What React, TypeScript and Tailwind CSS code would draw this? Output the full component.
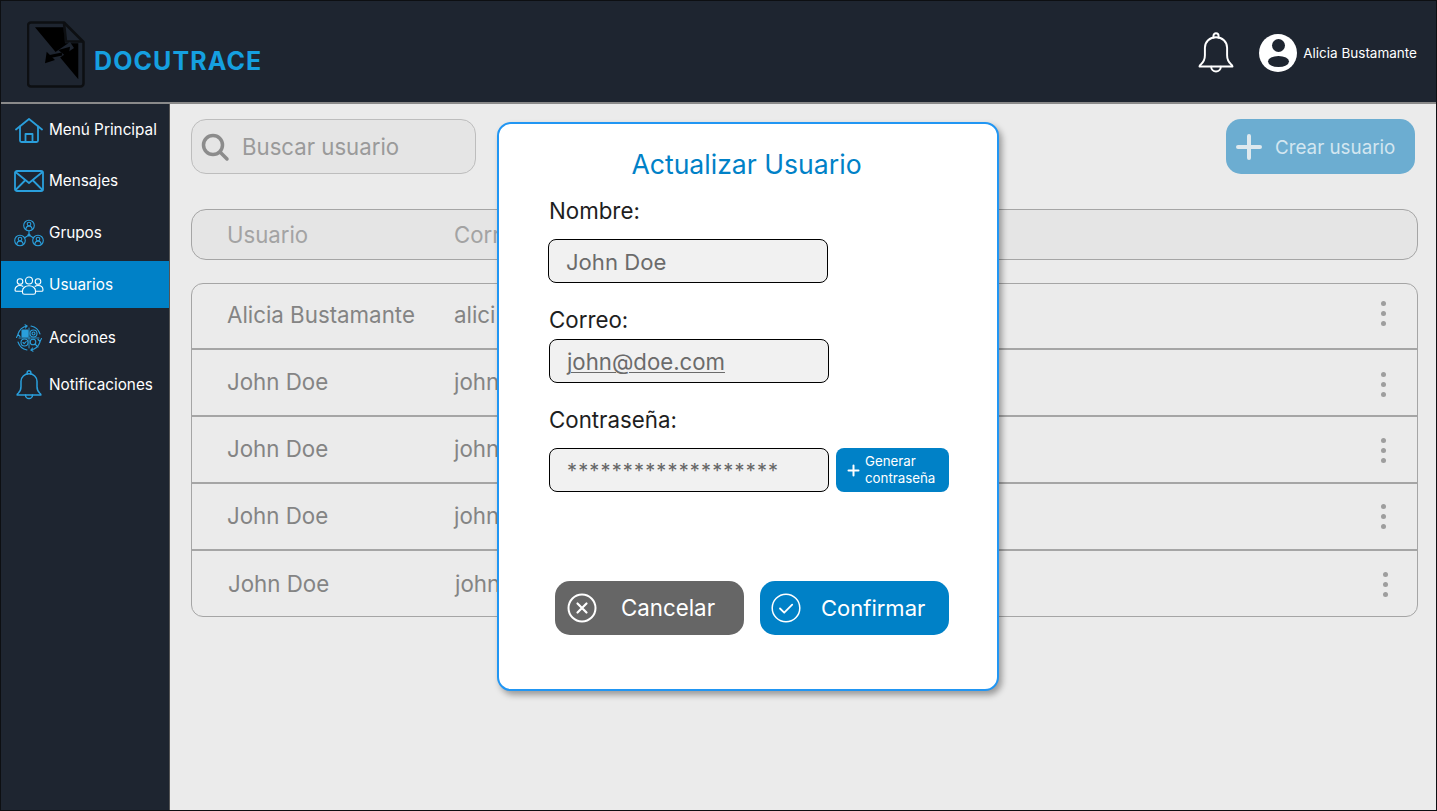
const items = [
  { label: "Menú Principal", icon: <HomeIcon />, cls: "h-[52px]" },
  { label: "Mensajes", icon: <MailIcon />, cls: "h-[50px]" },
  { label: "Grupos", icon: <GroupsIcon />, cls: "h-[54px]" },
  { label: "Usuarios", icon: <UsersIcon />, cls: "h-[47px] mt-[1px] pt-[2px] bg-[#0081c7]" },
  { label: "Acciones", icon: <ActionsIcon />, cls: "h-[46px] mt-[7px]" },
  { label: "Notificaciones", icon: <SideBellIcon />, cls: "h-[46px] mt-[1px]" },
];

const rows = [
  { name: "Alicia Bustamante", mail: "alici", cls: "h-[66px] pl-[35px] pb-[2px]", dots: "mb-[3px]" },
  { name: "John Doe", mail: "john", cls: "h-[67px] pl-[35px] pb-[1px]", dots: "mt-[4px]" },
  { name: "John Doe", mail: "john", cls: "h-[67px] pl-[35px] pb-[1px]", dots: "mt-[3px]" },
  { name: "John Doe", mail: "john", cls: "h-[67px] pl-[35px] pb-[1px]", dots: "mt-[1px]" },
  { name: "John Doe", mail: "john", cls: "h-[65px] pl-[36px]", dots: "mr-[-2px] mt-[2px]" },
];

function HomeIcon() {
  return (
    <svg width="28" height="25" viewBox="0 0 28 25" fill="none" stroke="#2a9fdc" strokeWidth="1.800" strokeLinejoin="round" strokeLinecap="round">
      <path d="M1 11.500 14 1l13 10.500" />
      <path d="M5 8.500V22.500a1.500 1.500 0 0 0 1.500 1.500h15a1.500 1.500 0 0 0 1.500-1.500V8.500" />
      <path d="M10.500 24v-8h7v8" />
    </svg>
  );
}

function MailIcon() {
  return (
    <svg width="30" height="22" viewBox="0 0 30 22" fill="none" stroke="#2a9fdc" strokeWidth="1.800" strokeLinejoin="round" strokeLinecap="round">
      <rect x="1" y="1" width="28" height="20" rx="2" />
      <path d="M1.500 2 15 13 28.500 2" />
      <path d="M1.500 20 11 10.500M28.500 20 19 10.500" />
    </svg>
  );
}

function Person({ x, y }: { x: number; y: number }) {
  return (
    <g transform={`translate(${x} ${y})`}>
      <circle cx="0" cy="0" r="5.300" />
      <circle cx="0" cy="-1.400" r="1.800" />
      <path d="M-3.200 3.500c.4-2.200 1.700-3 3.200-3s2.800.8 3.200 3" />
    </g>
  );
}

function GroupsIcon() {
  return (
    <svg width="30" height="28" viewBox="0 0 30 28" fill="none" stroke="#2a9fdc" strokeWidth="1.100" strokeLinecap="round">
      <Person x={15} y={6.500} />
      <Person x={6} y={21.500} />
      <Person x={24} y={21.500} />
      <path d="M15 12v4M15 16l-4.600 3M15 16l4.600 3" />
      <circle cx="15" cy="16" r="1" fill="#2a9fdc" />
    </svg>
  );
}

function UsersIcon() {
  return (
    <svg width="30" height="19" viewBox="0 0 30 19" fill="none" stroke="#ffffff" strokeWidth="1.100" strokeLinecap="round" strokeLinejoin="round">
      <circle cx="15" cy="4.500" r="3.500" />
      <path d="M8.500 16.500v-1.500c0-3 2.800-5.200 6.500-5.200s6.500 2.200 6.500 5.200v1.500c0 1-1 1.800-2 1.800h-9c-1 0-2-.8-2-1.800Z" />
      <circle cx="6" cy="5.500" r="2.800" />
      <circle cx="24" cy="5.500" r="2.800" />
      <path d="M8.800 10.300C8 9.700 7 9.500 6 9.500c-3 0-5 1.800-5 4.500 0 .8.600 1.300 1.300 1.300h6" />
      <path d="M21.200 10.300c.8-.6 1.800-.8 2.800-.8 3 0 5 1.800 5 4.500 0 .8-.6 1.300-1.300 1.300h-6" />
    </svg>
  );
}

function ActionsIcon() {
  return (
    <svg width="28" height="28" viewBox="0 0 28 28" fill="none" stroke="#2a9fdc" strokeWidth="1.100" strokeLinecap="round" strokeLinejoin="round">
      <path d="M3 10A12 12 0 0 1 12 2M16 2a12 12 0 0 1 9 8M25 18a12 12 0 0 1-9 8M12 26a12 12 0 0 1-9-8" />
      <path d="M1.500 13.500 3 10.500l2 2M26.500 14.500 25 17.500l-2-2M10 .8 12 2l-1.500 2M18 27.200 16 26l1.500-2" />
      <rect x="7" y="6" width="6" height="7" rx="0.500" fill="#2a9fdc" />
      <circle cx="18.500" cy="9.500" r="3.500" />
      <circle cx="18.500" cy="9.500" r="1.500" />
      <circle cx="9.500" cy="18.500" r="3.500" />
      <path d="m8 18.500 1.200 1.200 2-2.200" />
      <circle cx="18" cy="18" r="2.800" />
      <path d="m20 20 3 3" />
      <path d="M14 4v20M4 14h20" strokeWidth="0.900" />
    </svg>
  );
}

function BellIcon({ color, size, sw }: { color: string; size: number; sw: number }) {
  return (
    <svg width={size} height={size * 1.15} viewBox="0 0 24 27.600" fill="none" stroke={color} strokeWidth={sw} strokeLinecap="round" strokeLinejoin="round">
      <path d="M1 23c0-.6.400-1 1-1.500 1.700-1.500 2.600-3.500 2.600-6V10.500C4.600 6.500 7.800 3.500 12 3.500s7.400 3 7.400 7v5c0 2.500.9 4.500 2.600 6 .6.500 1 .9 1 1.500H1Z" />
      <path d="M10.300 3.700V2.500a1.700 1.700 0 0 1 3.400 0v1.200" />
      <path d="M8.800 23.200a3.200 3.200 0 0 0 6.400 0" />
    </svg>
  );
}

function SideBellIcon() {
  return <BellIcon color="#2a9fdc" size={26} sw={1.400} />;
}

function LogoIcon() {
  return (
    <svg width="58" height="67" viewBox="0 0 58 67" fill="none">
      <path d="M4 1.500h33L56.500 21v41.500a3 3 0 0 1-3 3H4a3 3 0 0 1-3-3v-58a3 3 0 0 1 3-3Z" stroke="#0d0f12" strokeWidth="2.500" strokeLinejoin="round" />
      <path d="M37 2l2 18.500h17" stroke="#0d0f12" strokeWidth="2.500" />
      <path d="M8 6.300h28.300L38 22.300h13.300v36Z" fill="#000000" />
      <path d="M16 44 45 24" stroke="#1e2530" strokeWidth="7" />
      <path d="M18 42.300 19.700 30.700 28 39ZM43 25.700 31.300 29 41.300 37.300Z" fill="#000000" />
      <path d="M23 35.500 35 33" stroke="#000000" strokeWidth="3" />
    </svg>
  );
}

function App() {
  return (
    <div className="relative h-[811px] w-[1437px] overflow-hidden border border-[#0d0f12] bg-[#ebebeb] font-['Inter',sans-serif]">
      <header className="flex h-[103px] items-center justify-between border-b-2 border-[#8a8a8a] bg-[#1e2530] pl-[26px] pr-[19px]">
        <div className="mt-[6px] flex items-center gap-[9px]">
          <LogoIcon />
          <span className="mt-[14px] text-[25px] font-bold tracking-[1.100px] text-[#15a0e0]">DOCUTRACE</span>
        </div>
        <div className="mt-[3px] flex items-center">
          <BellIcon color="#ffffff" size={36} sw={1.300} />
          <div className="ml-[25px] flex h-[38px] w-[38px] flex-col items-center justify-center gap-[4px] overflow-hidden rounded-full bg-white">
            <div className="h-[13px] w-[13px] rounded-full bg-[#1e2530]" />
            <div className="h-[11px] w-[21px] rounded-[50%] bg-[#1e2530]" />
          </div>
          <span className="ml-[6px] text-[13.500px] text-white">Alicia Bustamante</span>
        </div>
      </header>

      <div className="flex h-[706px]">
        <aside className="h-full w-[169px] shrink-0 border-r border-[#555] bg-[#1e2530]">
          {items.map((item) => (
            <div key={item.label} className={`flex items-center ${item.cls}`}>
              <div className="flex w-[48px] shrink-0 justify-center pl-[7px]">{item.icon}</div>
              <span className="text-[15.300px] text-white">{item.label}</span>
            </div>
          ))}
        </aside>

        <main className="flex-1 pl-[21px] pr-[18px] pt-[15px]">
          <div className="flex items-center justify-between">
            <div className="flex h-[55px] w-[285px] items-center rounded-[15px] border border-[#bdbdbd] bg-[#e5e5e5] pl-[8px]">
              <svg width="30" height="30" viewBox="0 0 30 30" fill="none" stroke="#8c8c8c" strokeWidth="3.500" strokeLinecap="round">
                <circle cx="13" cy="13" r="9.500" />
                <path d="m20 20 7 7" />
              </svg>
              <span className="ml-[12px] mt-[1px] text-[22.200px] text-[#9a9a9a]">Buscar usuario</span>
            </div>
            <div className="mr-[3px] flex h-[55px] w-[189px] items-center rounded-[15px] bg-[#6cadd1] pl-[10px]">
              <svg width="26" height="26" viewBox="0 0 26 26" stroke="#dfe9ee" strokeWidth="4" strokeLinecap="round">
                <path d="M13 2v22M2 13h22" />
              </svg>
              <span className="ml-[13px] mt-[3px] text-[18.800px] text-[#d3e6f0]">Crear usuario</span>
            </div>
          </div>

          <div className="mt-[35px] flex h-[51px] items-center rounded-[15px] border border-[#a5a5a5] bg-[#e5e5e5] pl-[35px] text-[22.200px] text-[#a3a3a3]">
            <span className="w-[227px]">Usuario</span>
            <span>Correo</span>
          </div>

          <div className="mt-[23px] overflow-hidden rounded-[12px] border border-[#a5a5a5]">
            {rows.map((row, i) => (
              <div key={i} className={`flex items-center border-[#a5a5a5] pr-[31px] text-[22.300px] text-[#848484] not-last:border-b-2 ${row.cls}`}>
                <span className="w-[227px]">{row.name}</span>
                <span className="flex-1">{row.mail}</span>
                <div className={`flex flex-col gap-[5px] ${row.dots}`}>
                  <div className="h-[5px] w-[5px] rounded-full bg-[#9e9e9e]" />
                  <div className="h-[5px] w-[5px] rounded-full bg-[#9e9e9e]" />
                  <div className="h-[5px] w-[5px] rounded-full bg-[#9e9e9e]" />
                </div>
              </div>
            ))}
          </div>
        </main>
      </div>

      {/* modal */}
      <div className="absolute left-[496px] top-[121px] h-[569px] w-[502px] rounded-[14px] border-[2.500px] border-[#2196f3] bg-white pl-[50px] pt-[22px] shadow-[3px_4px_6px_rgba(0,0,0,0.35)]">
        <h2 className="pr-[53px] text-center text-[26.600px] leading-[36px] text-[#0081c7]">Actualizar Usuario</h2>
        <label className="mt-[14px] block text-[22.300px] leading-[30px] text-[#1e1e1e]">Nombre:</label>
        <div className="ml-[-1px] mt-[13px] flex h-[44px] w-[280px] items-center rounded-[8px] border border-black bg-[#f1f1f1] pl-[17px] pt-[3px] text-[22.100px] text-[#6b6b6b]">John Doe</div>
        <label className="mt-[22px] block text-[22.300px] leading-[30px] text-[#1e1e1e]">Correo:</label>
        <div className="mt-[4px] flex h-[44px] w-[280px] items-center rounded-[8px] border border-black bg-[#f1f1f1] pl-[17px] pt-[2px] text-[22.200px] text-[#6b6b6b] underline decoration-1 underline-offset-2">john@doe.com</div>
        <label className="mt-[22px] block text-[22.300px] leading-[30px] text-[#1e1e1e]">Contraseña:</label>
        <div className="mt-[13px] flex items-stretch gap-[7px]">
          <div className="flex h-[44px] w-[280px] items-center rounded-[8px] border border-black bg-[#f1f1f1] pl-[17px] pt-[2px] text-[20px] tracking-[1.150px] text-[#666]">*******************</div>
          <div className="flex w-[113px] items-center rounded-[8px] bg-[#0081c7] pl-[11px]">
            <svg width="13" height="13" viewBox="0 0 13 13" stroke="#fff" strokeWidth="2" strokeLinecap="round">
              <path d="M6.500 1.500v10M1.500 6.500h10" />
            </svg>
            <span className="ml-[5px] text-[13.300px] leading-[17px] text-white">Generar<br />contraseña</span>
          </div>
        </div>
        <div className="ml-[6px] mt-[89px] flex gap-[16px]">
          <div className="flex h-[54px] w-[189px] items-center rounded-[15px] bg-[#666666] pl-[12px]">
            <svg width="30" height="30" viewBox="0 0 30 30" fill="none" stroke="#fff" strokeWidth="2" strokeLinecap="round">
              <circle cx="15" cy="15" r="13.500" />
              <path d="m10.500 10.500 9 9M19.500 10.500l-9 9" strokeWidth="2.200" />
            </svg>
            <span className="ml-[24px] text-[22.300px] text-white">Cancelar</span>
          </div>
          <div className="flex h-[54px] w-[189px] items-center rounded-[15px] bg-[#0081c7] pl-[11px]">
            <svg width="30" height="30" viewBox="0 0 30 30" fill="none" stroke="#fff" strokeWidth="1.500" strokeLinecap="round" strokeLinejoin="round">
              <circle cx="15" cy="15" r="13.800" />
              <path d="m9 15.500 4.200 4.200 8-8" strokeWidth="1.800" />
            </svg>
            <span className="ml-[20px] text-[22px] text-white">Confirmar</span>
          </div>
        </div>
      </div>
    </div>
  );
}

export default App;
